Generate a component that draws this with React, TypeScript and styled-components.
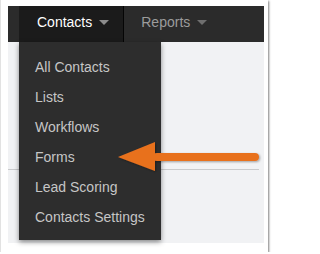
import styled, { createGlobalStyle } from "styled-components";

const GlobalStyle = createGlobalStyle`
  html, body {
    margin: 0;
    padding: 0;
    background: #ffffff;
  }
  body {
    font-family: "Liberation Sans", Arial, sans-serif;
  }
`;

const Frame = styled.div`
  position: relative;
  box-sizing: border-box;
  width: 268px;
  height: 252px;
  padding: 6px 5px 9px 7px;
  background: #ffffff;
  border-left: 1px solid #e2e2e2;
  box-shadow: 1px 1px 2px rgba(0, 0, 0, 0.5);
`;

const Screen = styled.div`
  position: relative;
  width: 256px;
  height: 237px;
  display: flex;
  flex-direction: column;
  background: #f1f2f4;
`;

const NavBar = styled.div`
  display: flex;
  height: 36px;
  padding-left: 11px;
  background: #2b2b2b;
`;

const NavTab = styled.div<{ $active?: boolean }>`
  display: flex;
  align-items: center;
  gap: 7px;
  padding: 0 14px 4px ${(p) => (p.$active ? 18 : 17)}px;
  font-size: 14px;
  color: ${(p) => (p.$active ? "#ffffff" : "#9c9c9c")};
  background: ${(p) => (p.$active ? "#1b1b1b" : "transparent")};
  border-right: ${(p) => (p.$active ? "1px solid #050505" : "none")};
`;

const Caret = styled.span<{ $color: string }>`
  width: 0;
  height: 0;
  border-left: 5px solid transparent;
  border-right: 5px solid transparent;
  border-top: 5px solid ${(p) => p.$color};
  margin-top: 1px;
`;

const Body = styled.div`
  flex: 1;
  display: flex;
  flex-direction: column;
  padding: 127px 5px 0 0;
`;

const Divider = styled.div`
  height: 1px;
  background: #c9cacc;
`;

const Menu = styled.ul`
  position: absolute;
  left: 11px;
  top: 36px;
  width: 142px;
  margin: 0;
  padding: 10px 0 8px;
  list-style: none;
  background: #2d2d2d;
  box-shadow: 0 2px 5px rgba(0, 0, 0, 0.45);
`;

const MenuItem = styled.li`
  height: 30px;
  line-height: 30px;
  padding-left: 16px;
  font-size: 14px;
  color: #c6c6c6;
  white-space: nowrap;
`;

const Pointer = styled.svg`
  position: absolute;
  left: 109px;
  top: 135px;
  overflow: visible;
`;

const items = [
  "All Contacts",
  "Lists",
  "Workflows",
  "Forms",
  "Lead Scoring",
  "Contacts Settings",
];

export default function App() {
  return (
    <>
      <GlobalStyle />
      <Frame>
        <Screen>
          <NavBar>
            <NavTab $active>
              Contacts
              <Caret $color="#8d8d8d" />
            </NavTab>
            <NavTab>
              Reports
              <Caret $color="#6f6f6f" />
            </NavTab>
          </NavBar>
          <Body>
            <Divider />
          </Body>
          <Menu>
            {items.map((item) => (
              <MenuItem key={item}>{item}</MenuItem>
            ))}
          </Menu>
          <Pointer width="146" height="34" viewBox="0 0 146 34">
            <defs>
              <filter id="sh" x="-10%" y="-30%" width="120%" height="160%">
                <feDropShadow dx="1" dy="1" stdDeviation="1" floodColor="#000" floodOpacity="0.35" />
              </filter>
            </defs>
            <g filter="url(#sh)" fill="#e8711f">
              <polygon points="1,16 38,1 38,30" />
              <rect x="36" y="12" width="106" height="8" rx="4" />
            </g>
          </Pointer>
        </Screen>
      </Frame>
    </>
  );
}
